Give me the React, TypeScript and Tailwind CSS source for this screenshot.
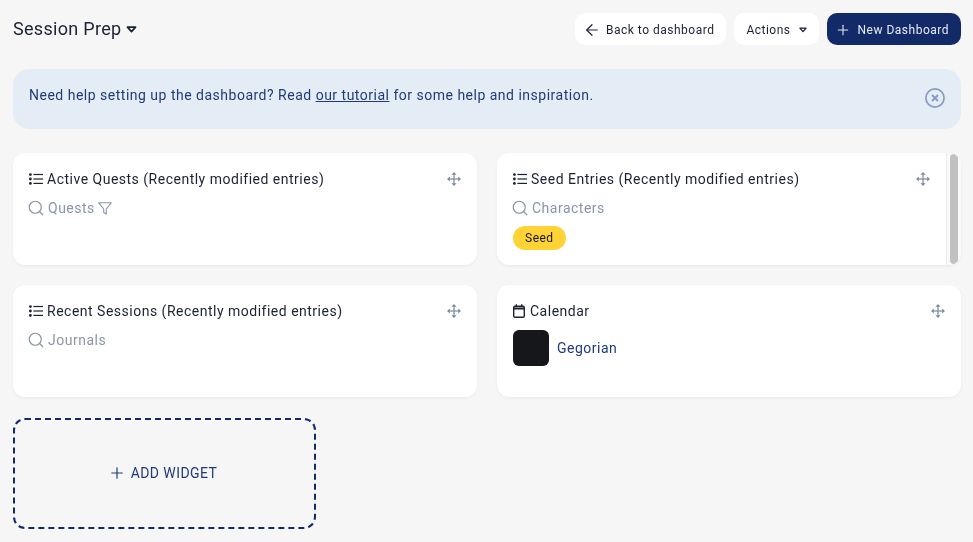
import React from 'react';
import { ArrowLeft, Plus, Search } from 'lucide-react';

const FONT = 'font-["Roboto",sans-serif]';

const Caret = ({ className }: { className?: string }) => (
  <svg viewBox="0 0 12 8" className={className} fill="none" stroke="currentColor" strokeWidth="2" strokeLinejoin="round">
    <path d="M1.4 1.2h9.2L6 6.4z" />
  </svg>
);

const ListIcon = () => (
  <svg viewBox="0 0 14 12" className="h-3 w-[14px] shrink-0" fill="currentColor">
    <circle cx="1.4" cy="1.6" r="1.4" />
    <circle cx="1.4" cy="6" r="1.4" />
    <circle cx="1.4" cy="10.4" r="1.4" />
    <rect x="4.4" y="0.9" width="9.6" height="1.2" />
    <rect x="4.4" y="5.4" width="9.6" height="1.2" />
    <rect x="4.4" y="9.8" width="9.6" height="1.2" />
  </svg>
);

const CalendarIcon = () => (
  <svg viewBox="0 0 12 14" className="mr-px h-[14px] w-3 shrink-0" fill="none" stroke="currentColor">
    <rect x="0.7" y="2.2" width="10.6" height="11" rx="1.3" strokeWidth="1.4" />
    <path d="M0.7 4.6h10.6" strokeWidth="2" />
    <path d="M3.3 0.2v2.6M8.7 0.2v2.6" strokeWidth="1.4" />
  </svg>
);

const MoveIcon = () => (
  <svg viewBox="0 0 14 14" className="h-[14px] w-[14px] text-[#7d8aa3]" fill="currentColor">
    <rect x="6.4" y="1.5" width="1.2" height="11" />
    <rect x="1.5" y="6.4" width="11" height="1.2" />
    <path d="M7 0l2.6 2.8H4.4zM7 14l-2.6-2.8h5.2zM0 7l2.8-2.6v5.2zM14 7l-2.8 2.6V4.4z" />
  </svg>
);

const FilterIcon = () => (
  <svg viewBox="0 0 14 13" className="h-[13px] w-[14px]" fill="none" stroke="currentColor" strokeWidth="1.1" strokeLinejoin="round">
    <path d="M0.8 0.8h12.4L8.3 7v4.9L5.7 10.4V7z" />
  </svg>
);

const CloseIcon = () => (
  <svg viewBox="0 0 20 20" className="mt-[3px] h-5 w-5 text-[#8a9bc0]" fill="none" stroke="currentColor">
    <circle cx="10" cy="10" r="9.1" strokeWidth="1.7" />
    <path d="M7 7l6 6M13 7l-6 6" strokeWidth="2" />
  </svg>
);

interface WidgetProps {
  icon: React.ReactNode;
  title: string;
  children: React.ReactNode;
  scrollbar?: boolean;
}

const Widget: React.FC<WidgetProps> = ({ icon, title, children, scrollbar }) => (
  <div className="flex h-28 overflow-hidden rounded-xl bg-white shadow-[0_1px_3px_rgba(0,0,0,0.06)]">
    <div className="min-w-0 flex-1 pl-4 pr-4 pt-4">
      <div className="flex h-5 items-center justify-between text-[#1c2233]">
        <div className="flex items-center gap-[4px] text-sm tracking-[0.5px]">
          {icon}
          <span>{title}</span>
        </div>
        <MoveIcon />
      </div>
      {children}
    </div>
    {scrollbar && (
      <div className="flex w-[15px] shrink-0 justify-center border-l border-[#ececec] bg-[#fafafa] py-px">
        <div className="h-full w-2 rounded-full bg-[#c1c1c1]" />
      </div>
    )}
  </div>
);

const SearchLine = ({ label, filter }: { label: string; filter?: boolean }) => (
  <div className="mt-[9px] flex h-5 items-center gap-[3px] text-sm tracking-[0.5px] text-[#8a95a8]">
    <Search className="-ml-[2px] h-[18px] w-[18px]" strokeWidth={1.6} />
    <span>{label}</span>
    {filter && <FilterIcon />}
  </div>
);

export default function App() {
  return (
    <div className={`${FONT} h-[542px] overflow-hidden bg-[#f6f6f7]`}>
      <div className="pl-[13px] pr-3 pt-[13px] will-change-transform">
        <div className="flex h-8 items-center justify-between">
          <div className="flex items-center gap-[5px] text-lg tracking-[0.3px] text-[#1c2233]">
            <span>Session Prep</span>
            <Caret className="mt-px h-[7px] w-[11px]" />
          </div>
          <div className="flex items-center gap-2 text-xs tracking-[0.5px]">
            <button className="flex h-8 items-center gap-[5px] rounded-[10px] bg-white px-3 pt-px text-[#1c2233]">
              <ArrowLeft className="-ml-1 h-[18px] w-[18px]" strokeWidth={1.6} />
              Back to dashboard
            </button>
            <button className="flex h-8 items-center gap-[8px] rounded-[10px] bg-white px-3 pt-px text-[#1c2233]">
              Actions
              <Caret className="h-[6px] w-2" />
            </button>
            <button className="flex h-8 items-center gap-[7px] rounded-[10px] bg-[#122a68] px-3 pt-px text-[#e8ebf3]">
              <Plus className="-ml-1 h-4 w-4" strokeWidth={1.6} />
              New Dashboard
            </button>
          </div>
        </div>

        <div className="mt-6 flex h-[60px] items-start justify-between rounded-2xl bg-[#e4edf5] pl-4 pr-4 pt-4 text-[#1f3a7a]">
          <p className="text-sm leading-5 tracking-[0.5px]">
            Need help setting up the dashboard? Read <span className="underline">our tutorial</span> for some help and inspiration.
          </p>
          <CloseIcon />
        </div>

        <div className="mt-6 grid grid-cols-2 gap-x-5 gap-y-5">
          <Widget icon={<ListIcon />} title="Active Quests (Recently modified entries)">
            <SearchLine label="Quests" filter />
          </Widget>
          <Widget icon={<ListIcon />} title="Seed Entries (Recently modified entries)" scrollbar>
            <SearchLine label="Characters" />
            <span className="mt-2 inline-flex h-6 items-center rounded-full bg-[#ffd335] px-3 text-xs tracking-[0.5px] text-[#14161c]">Seed</span>
          </Widget>
          <Widget icon={<ListIcon />} title="Recent Sessions (Recently modified entries)">
            <SearchLine label="Journals" />
          </Widget>
          <Widget icon={<CalendarIcon />} title="Calendar">
            <div className="mt-[9px] flex items-center gap-2">
              <div className="h-9 w-9 rounded-md bg-[#15171b]" />
              <span className="text-sm tracking-[0.5px] text-[#1f3a7a]">Gegorian</span>
            </div>
          </Widget>
        </div>

        <button className="mt-[21px] flex h-[111px] w-[303px] items-center justify-center gap-[5px] rounded-xl border-2 border-dashed border-[#122a68] pb-px pr-1 text-sm tracking-[0.42px] text-[#1f3a7a]">
          <Plus className="h-[18px] w-[18px]" strokeWidth={1.6} />
          ADD WIDGET
        </button>
      </div>
    </div>
  );
}
